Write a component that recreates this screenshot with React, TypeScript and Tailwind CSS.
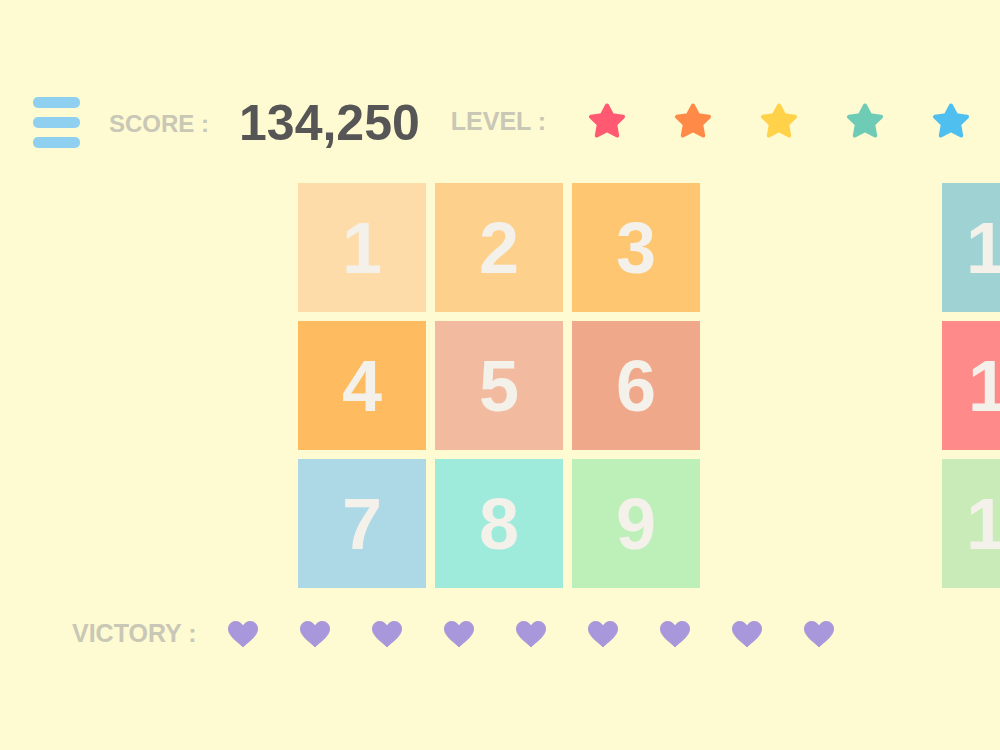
import React from "react";

const font = { fontFamily: '"Liberation Sans", Arial, sans-serif' };

const STARS = ["#ff5a72", "#ff8a48", "#ffd24a", "#6ecbb5", "#4fbff0"];

type Tile = { n: number; bg: string };

const MAIN_TILES: Tile[] = [
  { n: 1, bg: "bg-[#fddcaa]" },
  { n: 2, bg: "bg-[#fdd08c]" },
  { n: 3, bg: "bg-[#fec670]" },
  { n: 4, bg: "bg-[#ffbb60]" },
  { n: 5, bg: "bg-[#f2bba0]" },
  { n: 6, bg: "bg-[#f0a88a]" },
  { n: 7, bg: "bg-[#add8e6]" },
  { n: 8, bg: "bg-[#9eebdb]" },
  { n: 9, bg: "bg-[#bdefb9]" },
];

const SIDE_TILES: Tile[] = [
  { n: 10, bg: "bg-[#9fd3d3]" },
  { n: 11, bg: "bg-[#ff8a8a]" },
  { n: 12, bg: "bg-[#c8ebb8]" },
];

const Star: React.FC<{ color: string }> = ({ color }) => (
  <svg width="38" height="36" viewBox="0 0 38 36">
    <polygon
      points="19,2.5 24.2,12.2 35,13.8 27.2,21.4 29.2,32.5 19,27.3 8.8,32.5 10.8,21.4 3,13.8 13.8,12.2"
      fill={color}
      stroke={color}
      strokeWidth="4"
      strokeLinejoin="round"
    />
  </svg>
);

const Heart: React.FC = () => (
  <svg width="34" height="28" viewBox="0 0 34 28">
    <path
      d="M17 27 C13 22.5 2.5 16.5 2.5 9 C2.5 4.5 5.5 1.5 9.8 1.5 C13 1.5 15.5 3.5 17 6 C18.5 3.5 21 1.5 24.2 1.5 C28.5 1.5 31.5 4.5 31.5 9 C31.5 16.5 21 22.5 17 27 Z"
      fill="#a897da"
      stroke="#a897da"
      strokeWidth="1"
      strokeLinejoin="round"
    />
  </svg>
);

const TileBox: React.FC<{ tile: Tile }> = ({ tile }) => (
  <div
    className={`w-[128px] h-[129px] shrink-0 ${tile.bg} flex items-center justify-center text-[72px] font-bold text-[#f4f0ea] leading-none`}
  >
    {tile.n}
  </div>
);

export default function App() {
  return (
    <div
      className="w-[1000px] h-[750px] bg-[#fefad2] overflow-hidden relative"
      style={font}
    >
      {/* header */}
      <div className="flex items-center pt-[97px] pl-[33px] h-[148px]">
        <div className="flex flex-col gap-[9px] w-[47px]">
          <div className="h-[11px] rounded-[5px] bg-[#8fd0f0]" />
          <div className="h-[11px] rounded-[5px] bg-[#8fd0f0]" />
          <div className="h-[11px] rounded-[5px] bg-[#8fd0f0]" />
        </div>
        <span className="ml-[29px] text-[24px] font-bold text-[#c9c7b5] mt-[2px]">
          SCORE :
        </span>
        <span className="ml-[30px] text-[50px] font-bold text-[#565656] leading-none">
          134,250
        </span>
        <span className="ml-[31px] text-[25px] font-bold text-[#c9c7b5] -mt-[2px]">
          LEVEL :
        </span>
        <div className="ml-[42px] flex gap-[48px] -mt-[3px]">
          {STARS.map((c) => (
            <Star key={c} color={c} />
          ))}
        </div>
      </div>

      {/* boards */}
      <div className="flex mt-[35px] pl-[298px] gap-[242px]">
        <div className="grid grid-cols-[128px_128px_128px] gap-x-[9px] gap-y-[9px] shrink-0">
          {MAIN_TILES.map((t) => (
            <TileBox key={t.n} tile={t} />
          ))}
        </div>
        <div className="flex flex-col gap-[9px] shrink-0">
          {SIDE_TILES.map((t) => (
            <TileBox key={t.n} tile={t} />
          ))}
        </div>
      </div>

      {/* victory */}
      <div className="flex items-center mt-[27px] pl-[72px]">
        <span className="text-[25px] font-bold text-[#c9c7b5]">VICTORY :</span>
        <div className="ml-[29px] flex gap-[38px]">
          {Array.from({ length: 9 }).map((_, i) => (
            <Heart key={i} />
          ))}
        </div>
      </div>
    </div>
  );
}
